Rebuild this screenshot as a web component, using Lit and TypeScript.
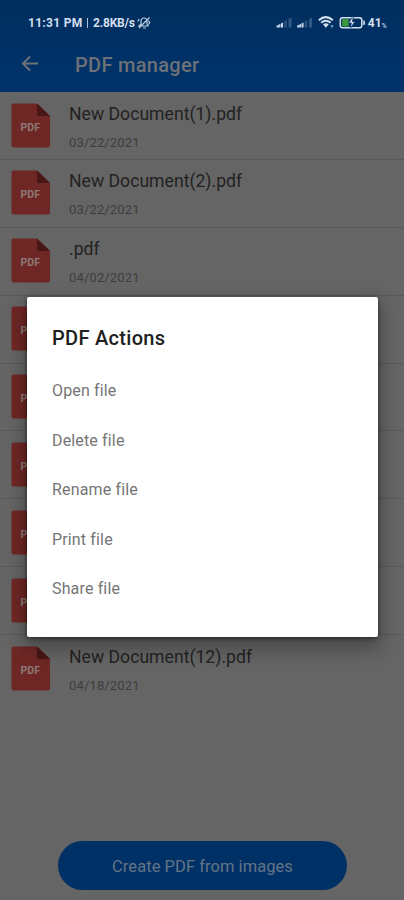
import { LitElement, html, css, svg } from "lit";
import { customElement, property } from "lit/decorators.js";

@customElement("status-bar")
class StatusBar extends LitElement {
  static styles = css`
    :host { display: flex; align-items: center; height: 36px; padding: 6px 16px 0 28px; box-sizing: border-box; margin-bottom: -6px; color: #d3dfee; font: 700 12px/14px Roboto, sans-serif; white-space: pre; }
    .clock { width: 58px; margin-top: 4px; letter-spacing: 0.3px; }
    .divider { width: 1px; height: 10px; margin: 4px 5px 0 1px; background: #a9bfda; }
    .rate { letter-spacing: -0.2px; font-size: 12px; margin-top: 4px; width: 43px; }
    .mute { width: 14px; height: 14px; margin: 4px 0 0 1px; }
    .icons { margin-left: auto; width: 112px; height: 16px; margin-top: 4px; }
  `;
  bars(x: number) {
    return svg`<path fill="#b8cae1" d="M${x} 12.5v-1.8l4-2v3.8z"/><path fill="#d3dfee" d="M${x + 4.5} 12.5v-4l2-1v5z"/>
      <path fill="#315883" d="M${x + 7.8} 12.5v-6l2.3-1.5v7.5zM${x + 12} 12.5V4l3-1.5v10z"/>`;
  }
  render() {
    return html`<span class="clock">11:31 PM</span><span class="divider"></span><span class="rate">2.8KB/s</span>
      <svg class="mute" viewBox="0 0 14 14" fill="none" stroke="#bdcee2" stroke-width="1.2"><path d="M2 10h9L10 8V5a3 3 0 0 0-6 0v3zM6 12h3M2 12 12.5 1.5M11.5 4.5l1.2 2-1.2 2M2 3 1 5.5"/></svg>
      <svg class="icons" viewBox="0 0 112 16">
        ${this.bars(0.5)}${this.bars(21)}
        <g fill="none" stroke="#d3dfee" stroke-width="2"><path d="M42.8 5.2q7-6.2 14 0" /><path d="M45.2 7.8q4.7-4 9.4 0"/><path d="M47.7 10.3q2.2-1.8 4.4 0"/></g>
        <path fill="#d3dfee" d="m48 10 1.8 3 2-3z"/><path fill="#83a7d5" d="M54.5 10.2h3l-1.5 3z"/>
        <rect x="64.3" y="2.8" width="21.5" height="10" rx="2.3" fill="none" stroke="#d3dfee" stroke-width="1.5"/>
        <rect x="66.2" y="4.2" width="6.5" height="7.2" fill="#3b9b3b"/>
        <path fill="#d3dfee" stroke="#083463" stroke-width=".7" d="M76.5 1.8 72.5 8h2.8l-.8 5 4.5-6.5h-2.8l1.5-4.7z"/>
        <path fill="#d3dfee" d="M87.2 5.4h1.2q1.2 2.2 0 4.5h-1.2z"/>
        <text x="91.8" y="12" font-family="Roboto, sans-serif" font-weight="700" font-size="12" fill="#d3dfee">41</text>
        <text x="105.5" y="12.5" font-family="Roboto, sans-serif" font-weight="700" font-size="7" fill="#a9bfda">%</text>
      </svg>`;
  }
}

@customElement("file-row")
class FileRow extends LitElement {
  @property() name = "";
  @property() date = "";
  static styles = css`
    :host { display: flex; height: 67.9px; box-sizing: border-box; border-bottom: 1px solid #595959; padding: 10.6px 11px 0; font-family: Roboto, sans-serif; }
    :host(:last-child) { border-color: transparent; }
    svg { width: 39px; height: 45px; flex: none; }
    .copy { margin-left: 19px; white-space: nowrap; }
    .name { font-size: 17.6px; line-height: 22px; color: #222; letter-spacing: 0.02px; }
    .date { font-size: 13px; line-height: 16px; color: #3d3d3d; margin-top: 10px; letter-spacing: 0.15px; }
  `;
  render() {
    return html`<svg viewBox="0 0 39 45"><path fill="#6f2725" d="M2.5.5H26L39 13v29.5q0 2-2 2H2.5q-2 0-2-2v-40q0-2 2-2z"/><path fill="#481615" d="M26 .5 39 13H28q-2 0-2-2z"/>
      <text x="9.5" y="28" font-family="Roboto, sans-serif" font-weight="700" font-size="10.5" textLength="19.5" fill="#8c7877">PDF</text></svg>
      <div class="copy"><div class="name">${this.name}</div><div class="date">${this.date}</div></div>`;
  }
}

@customElement("app-root")
class AppRoot extends LitElement {
  static styles = css`
    :host { display: flex; flex-direction: column; position: relative; height: 900px; overflow: hidden; background: #656565; font-family: Roboto, sans-serif; }
    header { height: 92px; flex: none; background: linear-gradient(#002e5c, #003166 50%, #003168); }
    .bar { display: flex; align-items: center; height: 68px; color: #6c7278; }
    .bar svg { width: 18px; height: 18px; margin: 0 0 0 21px; }
    .bar h1 { margin: 1px 0 0 36px; font-size: 20px; line-height: 24px; font-weight: 500; letter-spacing: 0.3px; }
    .create { width: 289px; height: 49px; margin: auto 57px 10px 58px; padding: 2px 0 0; border: 0; border-radius: 25px; flex: none; background: #003166; color: #647487; font: 400 16.5px Roboto, sans-serif; letter-spacing: 0.05px; }
    .dialog { position: absolute; left: 27px; top: 297px; width: 351px; height: 340px; box-sizing: border-box; padding: 29px 25px; background: #fff; border-radius: 2px; box-shadow: 0 9px 20px 2px rgba(0,0,0,.32), 0 1px 4px rgba(0,0,0,.5); }
    .dialog h2 { margin: 0 0 16px; font-size: 20px; line-height: 24px; font-weight: 500; color: #202020; letter-spacing: 0.3px; }
    .action { font-size: 16px; line-height: 49.5px; height: 49.5px; color: #757575; letter-spacing: 0.15px; }
  `;
  render() {
    const files = [["New Document(1).pdf", "03/22/2021"], ["New Document(2).pdf", "03/22/2021"], [".pdf", "04/02/2021"], ["", ""], ["", ""], ["", ""], ["", ""], ["", ""], ["New Document(12).pdf", "04/18/2021"]];
    return html`<header><status-bar></status-bar><div class="bar">
        <svg viewBox="0 0 18 18" fill="none" stroke="#6c7278" stroke-width="2"><path d="M17 8.5H2M9 1.5 2 8.5 9 15.5"/></svg><h1>PDF manager</h1></div></header>
      <main>${files.map(([n, d]) => html`<file-row .name=${n} .date=${d}></file-row>`)}</main>
      <button class="create">Create PDF from images</button>
      <section class="dialog"><h2>PDF Actions</h2>
        ${["Open file", "Delete file", "Rename file", "Print file", "Share file"].map((a) => html`<div class="action">${a}</div>`)}
      </section>`;
  }
}
